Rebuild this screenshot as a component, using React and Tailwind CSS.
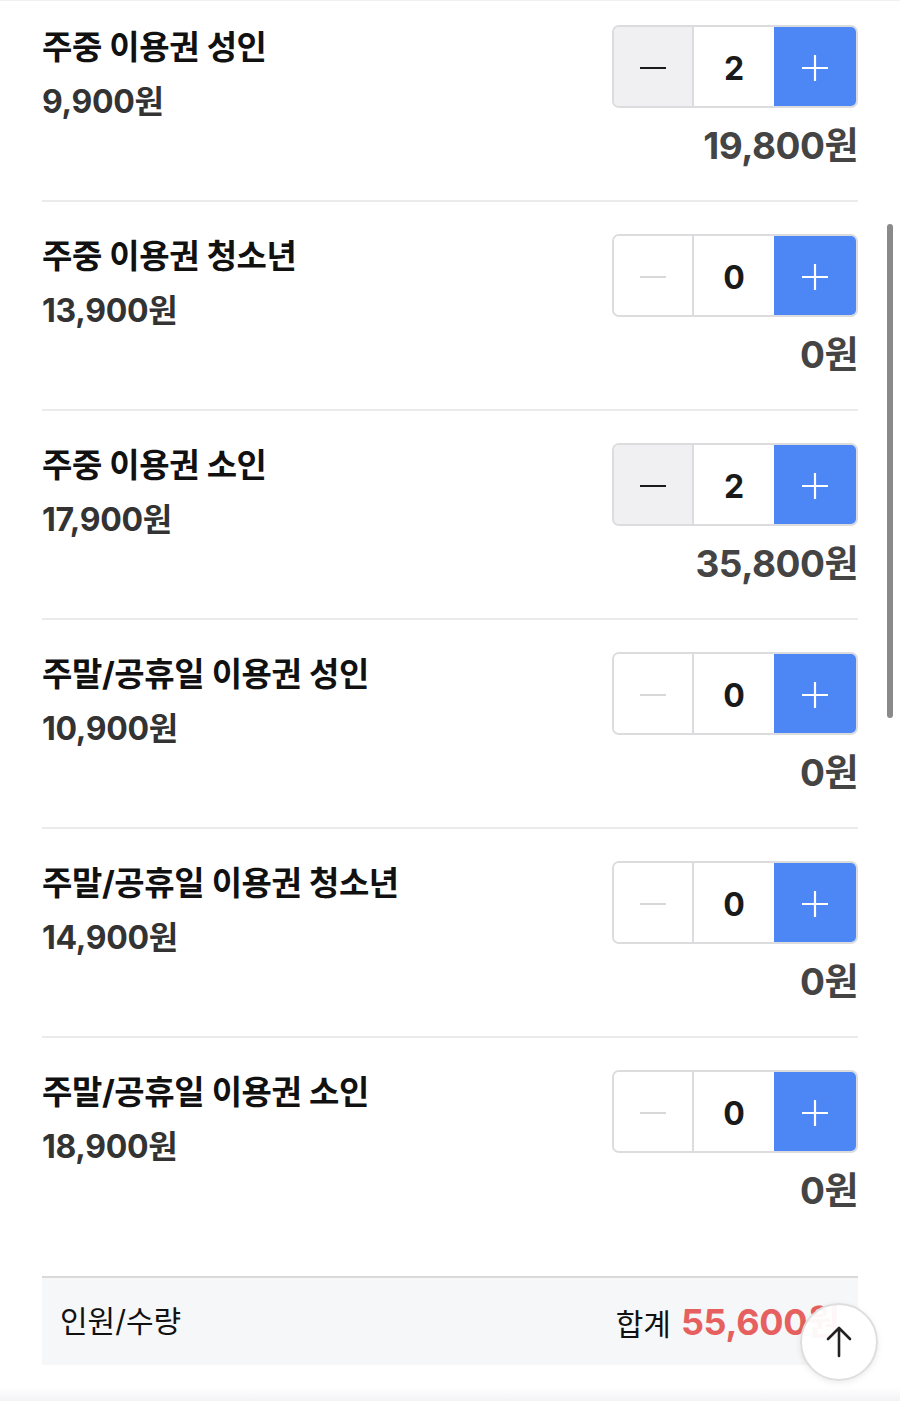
import * as React from "react";

const FONT = { fontFamily: '"Inter", "Noto Sans CJK KR", sans-serif' };

const tickets = [
  { name: "주중 이용권 성인", price: 9900, qty: 2 },
  { name: "주중 이용권 청소년", price: 13900, qty: 0 },
  { name: "주중 이용권 소인", price: 17900, qty: 2 },
  { name: "주말/공휴일 이용권 성인", price: 10900, qty: 0 },
  { name: "주말/공휴일 이용권 청소년", price: 14900, qty: 0 },
  { name: "주말/공휴일 이용권 소인", price: 18900, qty: 0 },
];

const won = (n) => n.toLocaleString("en-US") + "원";

function Stepper({ qty, onMinus, onPlus }) {
  const active = qty > 0;
  return (
    <div className="flex h-[83px] w-[246px] overflow-hidden rounded-[7px] border-2 border-[#dcdcde]">
      <button
        onClick={onMinus}
        className={`flex w-[80px] items-center justify-center border-r-2 border-[#dcdcde] pt-[3px] ${
          active ? "bg-[#f0f0f2]" : "bg-white"
        }`}
      >
        <span className={`block h-[2px] w-[26px] ${active ? "bg-[#1a1a1a]" : "bg-[#d8d8d8]"}`} />
      </button>
      <div className="flex w-[80px] items-center justify-center bg-white pt-[4px] text-[32px] font-bold text-[#1a1a1a]">
        {qty}
      </div>
      <button onClick={onPlus} className="flex flex-1 items-center justify-center bg-[#4d86f5] pt-[2px]">
        <svg width="30" height="30" viewBox="0 0 30 30" fill="none">
          <path d="M15 2v26M2 15h26" stroke="white" strokeWidth="2.2" />
        </svg>
      </button>
    </div>
  );
}

export default function App() {
  const [items, setItems] = React.useState(tickets);

  const change = (i, d) =>
    setItems((prev) => prev.map((t, j) => (j === i ? { ...t, qty: Math.max(0, t.qty + d) } : t)));

  const total = items.reduce((s, t) => s + t.price * t.qty, 0);

  return (
    <div className="relative h-[1401px] overflow-hidden bg-white" style={FONT}>
      {/* top edge line */}
      <div className="h-[1px] bg-[#f0f0f0]" />

      <div className="mx-[42px] -mt-[8px]">
        {items.map((t, i) => (
          <div
            key={t.name}
            className={`flex justify-between pt-[32px] pb-[32px] ${
              i < items.length - 1 ? "border-b-2 border-[#ebebeb]" : ""
            }`}
          >
            <div className="pt-[2px]">
              <div className="text-[33px] font-bold leading-[40px] tracking-[-0.4px] text-[#111]">{t.name}</div>
              <div className="mt-[15px] text-[32px] font-bold leading-[40px] tracking-[-0.3px] text-[#333]">
                {won(t.price)}
              </div>
            </div>
            <div className="flex flex-col items-end">
              <Stepper qty={t.qty} onMinus={() => change(i, -1)} onPlus={() => change(i, 1)} />
              <div className="mt-[16px] text-[37px] font-bold leading-[44px] tracking-[-0.5px] text-[#444]">
                {won(t.price * t.qty)}
              </div>
            </div>
          </div>
        ))}

        {/* 합계 */}
        <div className="mt-[31px] flex h-[89px] items-center justify-between border-t-2 border-[#d9d9d9] bg-[#f6f7f9] px-[18px]">
          <span className="text-[30px] text-[#111]">인원/수량</span>
          <span className="flex items-baseline gap-[10px]">
            <span className="text-[30px] text-[#111]">합계</span>
            <span className="text-[36px] font-bold tracking-[-0.3px] text-[#e5605e]">{won(total)}</span>
          </span>
        </div>
      </div>

      {/* bottom bar edge */}
      <div className="absolute bottom-0 left-0 right-0 h-[14px] bg-gradient-to-b from-white to-[#f3f3f5]" />

      {/* overlay scrollbar */}
      <div className="absolute left-[887px] top-[224px] h-[494px] w-[6px] rounded-full bg-[#8a8a8a]" />

      {/* scroll to top */}
      <button className="absolute left-[800px] top-[1303px] flex h-[78px] w-[78px] items-center justify-center rounded-full border-2 border-[#dedede] bg-white/95 shadow-[0_2px_6px_rgba(0,0,0,0.08)]">
        <svg width="36" height="36" viewBox="0 0 36 36" fill="none">
          <path d="M18 32V5M7 15L18 4l11 11" stroke="#222" strokeWidth="2.6" strokeLinecap="round" strokeLinejoin="round" />
        </svg>
      </button>
    </div>
  );
}
